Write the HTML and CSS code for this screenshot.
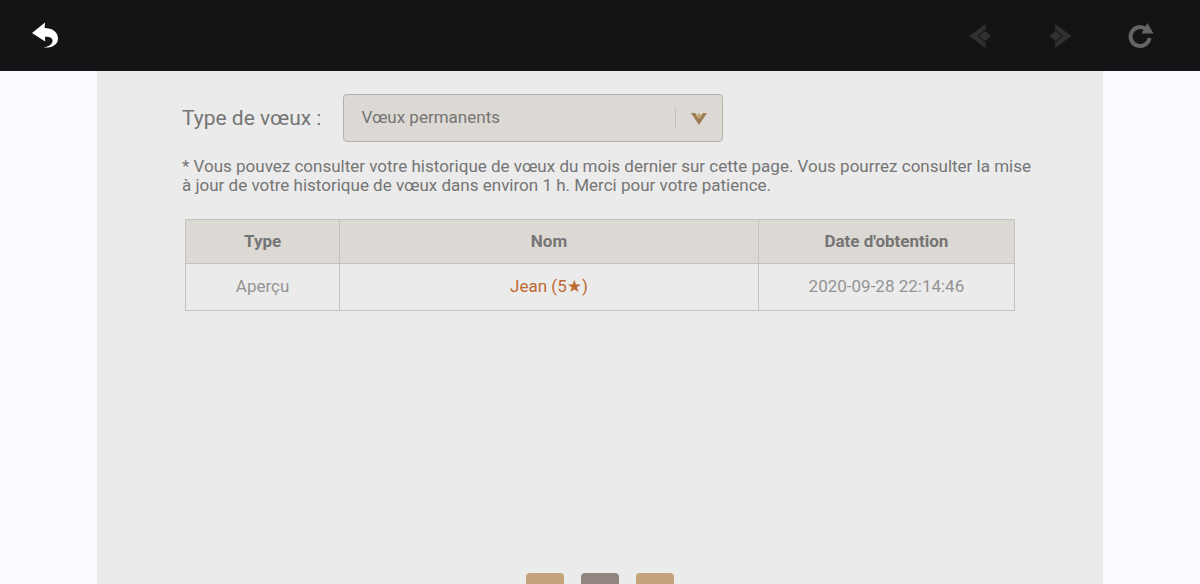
FILE: index.html
```html
<!DOCTYPE html>
<html lang="fr">
<head>
<meta charset="utf-8">
<meta name="viewport" content="width=device-width, initial-scale=1">
<title>Historique de vœux</title>
<link rel="stylesheet" href="styles.css">
</head>
<body>
<header class="topbar">
  <button class="icon-button" type="button" aria-label="Retour">
    <svg class="icon-back" viewBox="0 0 28 28" aria-hidden="true"><path d="M1 11 14 0.500 13.600 6C21 6 27 10 27 16.500 27 22.500 21.500 26.200 12.500 25.500 18 24.500 22 22 21.500 18 21 15.300 17.500 14.200 14 14.800L14.200 19.500Z"/></svg>
  </button>
  <nav class="browser-nav" aria-label="Navigation">
    <button class="icon-button dim" type="button" aria-label="Précédent">
      <svg class="icon-nav" viewBox="0 0 24 24" aria-hidden="true"><path d="M0 12 16.500 0V5L8.500 12 16.500 19V24ZM10 12 16 7 22 12 16 17Z"/></svg>
    </button>
    <button class="icon-button dim" type="button" aria-label="Suivant">
      <svg class="icon-nav" viewBox="0 0 24 24" aria-hidden="true"><path d="M22.500 12 6 0V5L14 12 6 19V24ZM12.500 12 6.500 7 0.500 12 6.500 17Z"/></svg>
    </button>
    <button class="icon-button reload" type="button" aria-label="Actualiser">
      <svg class="icon-reload" viewBox="0 0 26 26" aria-hidden="true"><path class="ring" d="M17 5.400A9.500 9.500 0 1 0 21.500 15"/><path class="tip" d="M19.300 0 25.500 10.500 13.500 10.500Z"/></svg>
    </button>
  </nav>
</header>
<main class="page">
  <section class="sheet">
    <div class="filter">
      <label for="wish-type">Type de vœux :</label>
      <div class="select-box">
        <select id="wish-type"><option>Vœux permanents</option></select>
        <span class="select-mark">
          <svg viewBox="0 0 16 12" aria-hidden="true"><path class="chevron" d="M0 0H4L8 5 12 0H16L8 12Z"/><path class="gem" d="M8 0 11 3 8 6 5 3Z"/></svg>
        </span>
      </div>
    </div>
    <p class="note">* Vous pouvez consulter votre historique de vœux du mois dernier sur cette page. Vous pourrez consulter la mise à jour de votre historique de vœux dans environ 1 h. Merci pour votre patience.</p>
    <div class="results">
      <table>
        <colgroup><col class="col-type"><col class="col-name"><col class="col-date"></colgroup>
        <thead><tr><th scope="col">Type</th><th scope="col">Nom</th><th scope="col">Date d'obtention</th></tr></thead>
        <tbody><tr><td>Aperçu</td><td class="five-star">Jean (5★)</td><td>2020-09-28 22:14:46</td></tr></tbody>
      </table>
    </div>
    <nav class="pager" aria-label="Pages">
      <button type="button" aria-label="Page précédente"></button>
      <button class="current" type="button" aria-label="Page actuelle"></button>
      <button type="button" aria-label="Page suivante"></button>
    </nav>
  </section>
</main>
</body>
</html>
```

FILE: styles.css
```css
* {
  box-sizing: border-box;
}

body {
  margin: 0;
  height: 100vh;
  display: flex;
  flex-direction: column;
  overflow: hidden;
  background: #fbfaff;
  color: #757575;
  font: 17px/19px Roboto, "DejaVu Sans", sans-serif;
}

button {
  padding: 0;
  border: 0;
  background: none;
}

svg {
  display: block;
}

.topbar {
  flex: none;
  display: flex;
  align-items: center;
  justify-content: space-between;
  height: 71px;
  padding: 1px 39px 0 25px;
  background: #131416;
}

.icon-button {
  display: grid;
  place-items: center;
  width: 40px;
  height: 40px;
  fill: #fff;
}

.icon-back {
  width: 28px;
  height: 28px;
}

.icon-nav {
  width: 24px;
  height: 24px;
}

.icon-reload {
  width: 26px;
  height: 26px;
}

.browser-nav {
  display: flex;
  gap: 40px;
}

.dim {
  fill: #2f3032;
}

.reload {
  fill: #636466;
}

.ring {
  fill: none;
  stroke: #636466;
  stroke-width: 4;
}

.page {
  flex: 1;
  min-height: 0;
  padding: 0 97px;
  overflow: hidden;
}

.sheet {
  padding: 23px 85px 24px;
  background: #ebebeb;
}

.filter {
  display: flex;
  align-items: center;
  gap: 22px;
}

.filter label {
  font-size: 21px;
  line-height: 24px;
}

.select-box {
  display: grid;
  flex: 0 1 380px;
  align-items: center;
}

.select-box select {
  grid-area: 1 / 1;
  width: 100%;
  height: 48px;
  padding: 0 60px 2px 17px;
  appearance: none;
  border: 1px solid #b3b1aa;
  border-radius: 4px;
  background: #dcd8d3;
  color: #757575;
  font: inherit;
}

.select-mark {
  grid-area: 1 / 1;
  justify-self: end;
  display: flex;
  align-items: center;
  height: 20px;
  padding: 2px 16px 0 15px;
  border-left: 1px solid #c5c2bc;
  pointer-events: none;
}

.select-mark svg {
  width: 16px;
  height: 12px;
}

.chevron {
  fill: #9b7d55;
}

.gem {
  fill: #c4a57c;
}

.note {
  margin: 15px -20px 24px 0;
}

.results {
  min-height: 354px;
  padding: 0 3px;
}

table {
  width: 100%;
  table-layout: fixed;
  border-collapse: collapse;
  text-align: center;
}

.col-type {
  width: 18.6%;
}

.col-name {
  width: 50.5%;
}

th,
td {
  padding: 0;
  border: 1px solid #c3c3bd;
}

th {
  height: 44px;
  background: #dcd8d3;
  font-weight: 700;
}

td {
  height: 47px;
  padding-bottom: 1px;
  color: #949494;
}

.five-star {
  color: #bd6932;
}

.pager {
  display: flex;
  justify-content: center;
  gap: 17px;
}

.pager button {
  width: 38px;
  height: 38px;
  border-radius: 4px;
  background: #c4a27b;
}

.pager .current {
  background: #91867f;
}
```
